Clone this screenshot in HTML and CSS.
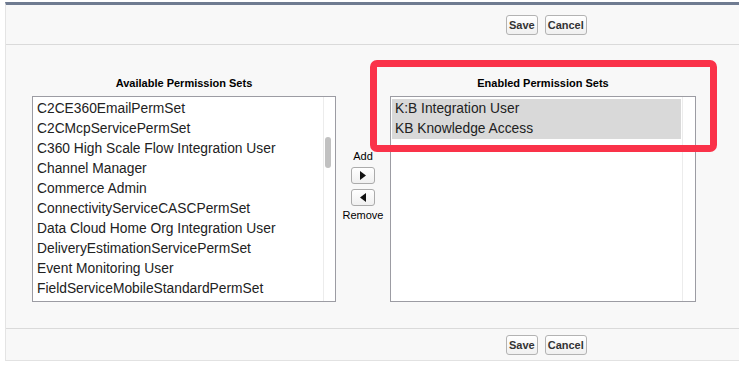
FILE: index.html
```html
<!DOCTYPE html>
<html>
<head>
<meta charset="utf-8">
<link rel="stylesheet" href="styles.css">
</head>
<body>
<div class="panel">
  <div class="btnbar">
    <button class="btn">Save</button>
    <button class="btn">Cancel</button>
  </div>
  <div class="main">
    <div class="col col-left">
      <div class="title">Available Permission Sets</div>
      <div class="list">
        <div class="items">
          <div class="item">C2CE360EmailPermSet</div>
          <div class="item">C2CMcpServicePermSet</div>
          <div class="item">C360 High Scale Flow Integration User</div>
          <div class="item">Channel Manager</div>
          <div class="item">Commerce Admin</div>
          <div class="item">ConnectivityServiceCASCPermSet</div>
          <div class="item">Data Cloud Home Org Integration User</div>
          <div class="item">DeliveryEstimationServicePermSet</div>
          <div class="item">Event Monitoring User</div>
          <div class="item">FieldServiceMobileStandardPermSet</div>
        </div>
        <div class="gutter"><div class="thumb"></div></div>
      </div>
    </div>
    <div class="mid">
      <div class="lbl lbl-add">Add</div>
      <button class="arrow arrow-add"><svg width="6" height="9" viewBox="0 0 6 9"><polygon points="0,0 6,4.5 0,9" fill="#111"/></svg></button>
      <button class="arrow arrow-remove"><svg width="6" height="9" viewBox="0 0 6 9"><polygon points="6,0 0,4.5 6,9" fill="#111"/></svg></button>
      <div class="lbl lbl-remove">Remove</div>
    </div>
    <div class="col col-right">
      <div class="title">Enabled Permission Sets</div>
      <div class="list">
        <div class="items">
          <div class="item sel">K:B Integration User</div>
          <div class="item sel">KB Knowledge Access</div>
        </div>
        <div class="gutter gutter-wide"></div>
      </div>
    </div>
    <div class="highlight"></div>
  </div>
  <div class="btnbar btnbar-bottom">
    <button class="btn">Save</button>
    <button class="btn">Cancel</button>
  </div>
</div>
</body>
</html>
```

FILE: styles.css
```css
html, body {
  margin: 0;
  background: #ffffff;
  font-family: "Liberation Sans", Arial, sans-serif;
  overflow: hidden;
}

.panel {
  margin: 2px -30px 0 5px;
  background: #f8f8f8;
  border-top: 3px solid #6f7b91;
  border-left: 1px solid #e4e4e4;
  border-bottom: 1px solid #e2e2e2;
}

.btnbar {
  display: flex;
  gap: 7px;
  padding: 10px 0 9px 500px;
  border-bottom: 1px solid #dadada;
}

.btnbar-bottom {
  padding: 6px 0 5px 500px;
  border-bottom: none;
}

.btn {
  box-sizing: border-box;
  height: 20px;
  margin: 0;
  padding: 0 2px;
  font: bold 11px "Liberation Sans", Arial, sans-serif;
  color: #333;
  border: 1px solid #b3b3b3;
  border-radius: 3px;
  background: linear-gradient(#ffffff, #f0f0f0);
}

.main {
  position: relative;
  display: flex;
  padding: 31px 0 26px 26px;
  border-bottom: 1px solid #dadada;
}

.col {
  display: flex;
  flex-direction: column;
}

.col-left { width: 304px; }
.col-right { width: 306px; }

.title {
  height: 14px;
  line-height: 14px;
  margin-bottom: 6px;
  font-weight: bold;
  font-size: 11px;
  color: #000;
  text-align: center;
}

.list {
  box-sizing: border-box;
  height: 206px;
  display: flex;
  background: #fff;
  border: 1px solid #9c9ca3;
}

.items {
  flex: 1;
  min-width: 0;
  padding: 2px 1px;
}

.item {
  height: 20px;
  line-height: 20px;
  padding-left: 3px;
  font-size: 13.8px;
  color: #222;
  white-space: nowrap;
  overflow: hidden;
}

.sel { background: #d9d9d9; }

.gutter {
  width: 11px;
  border-left: 1px solid #ececec;
}

.gutter-wide { width: 12px; }

.thumb {
  width: 6px;
  height: 31px;
  margin: 40px 0 0 1px;
  border-radius: 3px;
  background: #c1c1c1;
}

.mid {
  width: 54px;
  display: flex;
  flex-direction: column;
  align-items: center;
  padding-top: 74px;
}

.lbl {
  font-size: 11px;
  line-height: 13px;
  color: #000;
}

.lbl-add { margin-bottom: 4px; }
.lbl-remove { margin-top: 3px; }

.arrow {
  box-sizing: border-box;
  width: 24px;
  height: 17px;
  margin: 0;
  padding: 0;
  display: flex;
  align-items: center;
  justify-content: center;
  border: 1px solid #ababab;
  border-radius: 3px;
  background: linear-gradient(#ffffff, #f0f0f0);
}

.arrow-remove { margin-top: 5px; }

.highlight {
  position: absolute;
  left: 364px;
  top: 15px;
  width: 347px;
  height: 92px;
  box-sizing: border-box;
  border: 7px solid #fa3249;
  border-radius: 7px;
}
```
